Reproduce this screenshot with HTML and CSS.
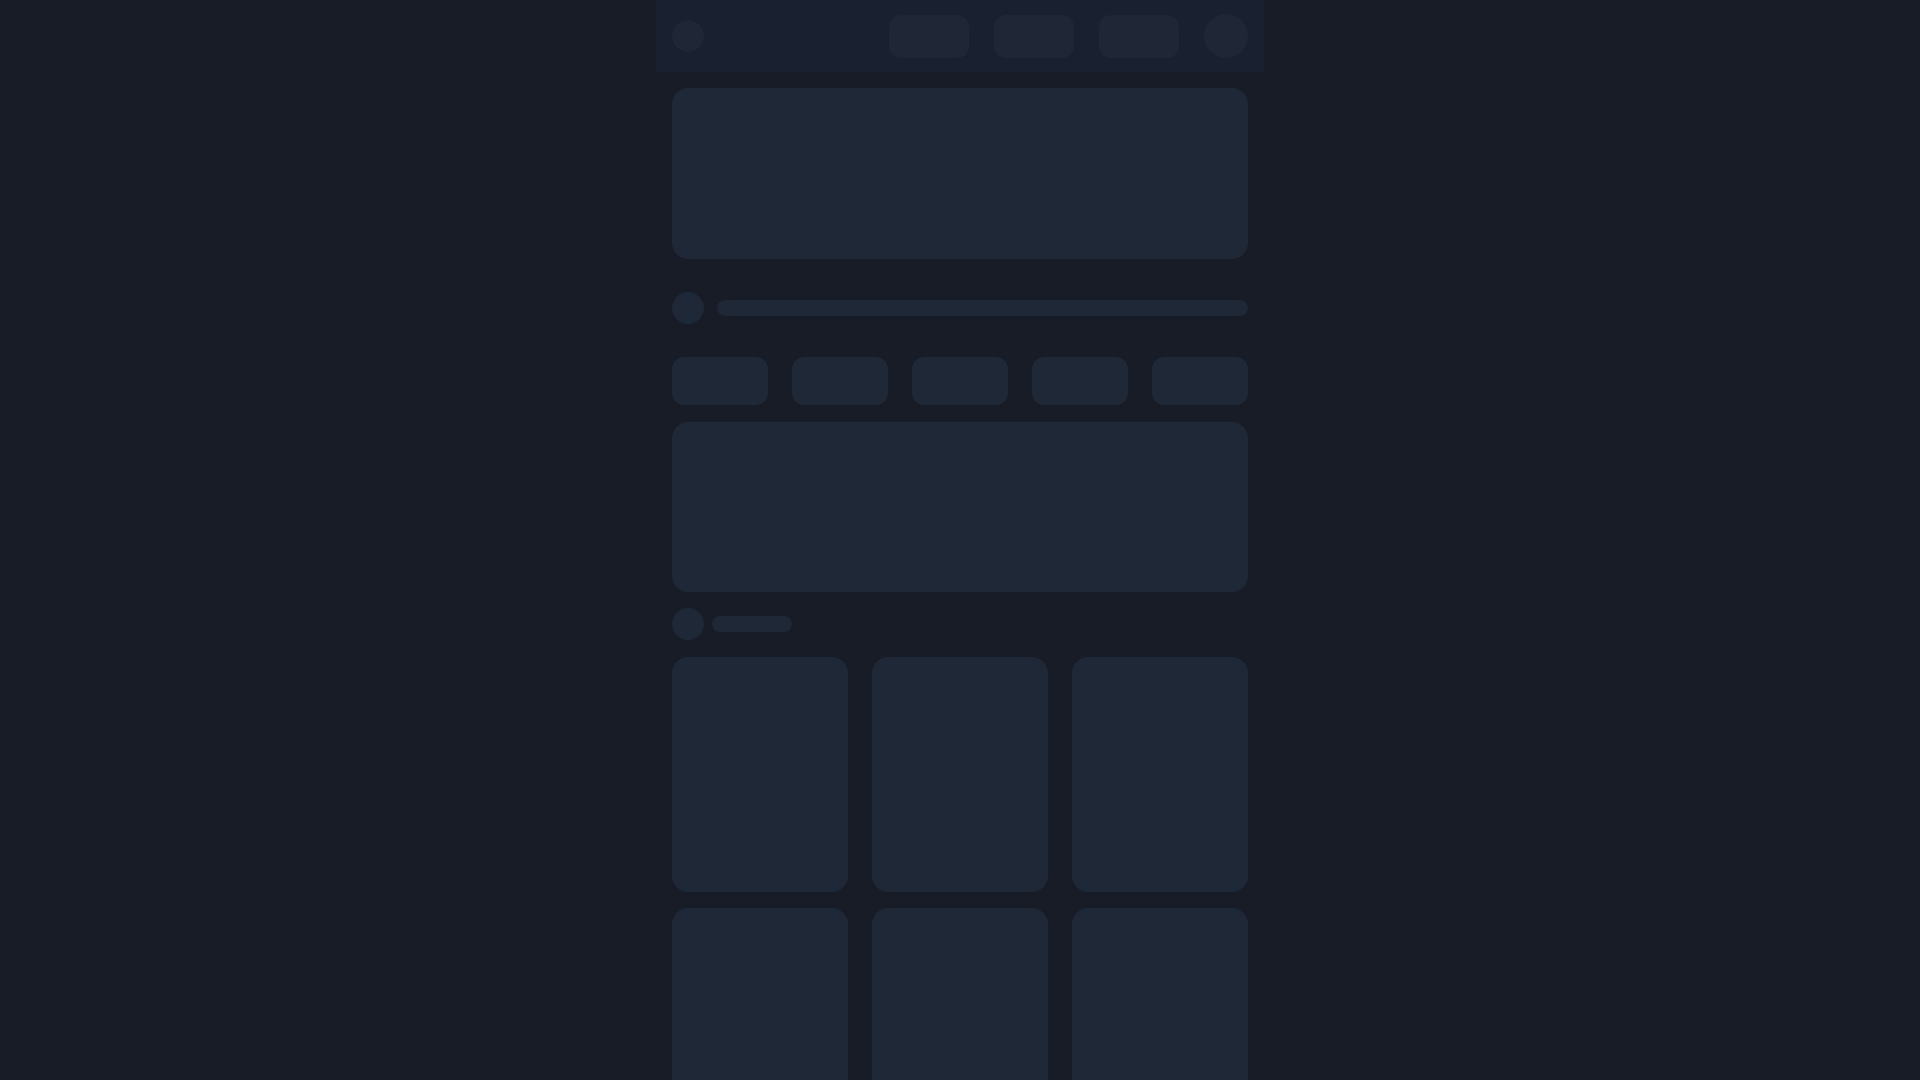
FILE: index.html
```html
<!DOCTYPE html>
<html lang="en">
<head>
<meta charset="utf-8">
<title>Loading</title>
<link rel="stylesheet" href="styles.css">
</head>
<body>
<div class="app">
  <header class="topbar">
    <div class="sk sk-logo"></div>
    <nav class="nav">
      <div class="sk sk-btn"></div>
      <div class="sk sk-btn"></div>
      <div class="sk sk-btn"></div>
      <div class="sk sk-avatar"></div>
    </nav>
  </header>
  <main class="content">
    <div class="sk sk-hero"></div>
    <div class="row row-search">
      <div class="sk sk-dot"></div>
      <div class="sk sk-bar sk-bar-full"></div>
    </div>
    <div class="chips">
      <div class="sk sk-chip"></div>
      <div class="sk sk-chip"></div>
      <div class="sk sk-chip"></div>
      <div class="sk sk-chip"></div>
      <div class="sk sk-chip"></div>
    </div>
    <div class="sk sk-banner"></div>
    <div class="row row-title">
      <div class="sk sk-dot"></div>
      <div class="sk sk-bar sk-bar-short"></div>
    </div>
    <div class="grid">
      <div class="sk sk-card"></div>
      <div class="sk sk-card"></div>
      <div class="sk sk-card"></div>
      <div class="sk sk-card"></div>
      <div class="sk sk-card"></div>
      <div class="sk sk-card"></div>
    </div>
  </main>
</div>
</body>
</html>
```

FILE: styles.css
```css
* { box-sizing: border-box; }
html, body {
  margin: 0;
  padding: 0;
  background: #171c27;
  font-family: "Inter", "Liberation Sans", sans-serif;
  overflow: hidden;
}
.app {
  width: 608px;
  margin: 0 auto;
  min-height: 100vh;
}
.sk { background: #1f2837; }
.topbar {
  height: 72px;
  background: #192131;
  display: flex;
  align-items: center;
  justify-content: space-between;
  padding: 0 16px;
}
.sk-logo {
  width: 32px;
  height: 32px;
  border-radius: 50%;
  background: #1f2736;
}
.nav {
  display: flex;
  align-items: center;
  gap: 25px;
}
.sk-btn {
  width: 80px;
  height: 43px;
  border-radius: 12px;
  background: #1f2736;
}
.sk-avatar {
  width: 44px;
  height: 44px;
  border-radius: 50%;
  background: #1f2736;
}
.content {
  padding: 16px 16px 0;
  display: flex;
  flex-direction: column;
}
.sk-hero {
  height: 171px;
  border-radius: 16px;
}
.row {
  display: flex;
  align-items: center;
}
.row-search {
  margin-top: 33px;
  gap: 13px;
}
.sk-dot {
  width: 32px;
  height: 32px;
  border-radius: 50%;
  flex: none;
}
.sk-bar {
  height: 16px;
  border-radius: 8px;
}
.sk-bar-full { flex: 1; }
.sk-bar-short { width: 80px; }
.chips {
  margin-top: 33px;
  display: grid;
  grid-template-columns: repeat(5, 1fr);
  gap: 24px;
}
.sk-chip {
  height: 48px;
  border-radius: 12px;
}
.sk-banner {
  margin-top: 17px;
  height: 170px;
  border-radius: 16px;
}
.row-title {
  margin-top: 16px;
  gap: 8px;
}
.grid {
  margin-top: 17px;
  display: grid;
  grid-template-columns: repeat(3, 1fr);
  column-gap: 24px;
  row-gap: 16px;
}
.sk-card {
  aspect-ratio: 3 / 4;
  border-radius: 16px;
}
```
